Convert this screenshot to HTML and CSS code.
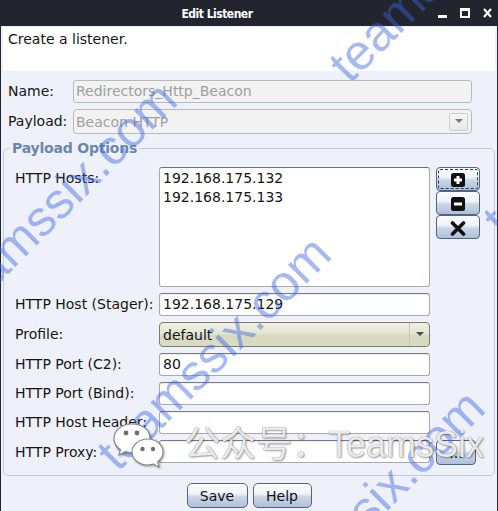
FILE: index.html
```html
<!DOCTYPE html>
<html>
<head>
<meta charset="utf-8">
<link rel="stylesheet" href="styles.css">
</head>
<body>
<div class="window">
  <div class="titlebar">
    <div class="title">Edit Listener</div>
    <div class="controls">
      <span class="ctl-min"></span>
      <span class="ctl-max"></span>
      <svg class="ctl-close" width="9" height="10" viewBox="0 0 9 10"><path d="M1 1L8 9M8 1L1 9" stroke="#fff" stroke-width="2.2"/></svg>
    </div>
  </div>
  <div class="body">
    <div class="desc">Create a listener.</div>
    <div class="top-form">
      <div class="lbl">Name:</div>
      <div class="field disabled">Redirectors_Http_Beacon</div>
      <div class="lbl">Payload:</div>
      <div class="combo disabled-combo">
        <span class="combo-text">Beacon HTTP</span>
        <span class="arrow-box-dis"><svg width="8" height="5" viewBox="0 0 8 5"><path d="M0 0H8L4 4Z" fill="#7a7a7a"/></svg></span>
      </div>
    </div>
    <fieldset class="options">
      <legend>Payload Options</legend>
      <div class="grid">
        <div class="lbl lbl-top">HTTP Hosts:</div>
        <div class="listbox">
          <div class="item">192.168.175.132</div>
          <div class="item">192.168.175.133</div>
        </div>
        <div class="side">
          <div class="btn side-btn focused"><svg width="14" height="14" viewBox="0 0 14 14"><rect width="14" height="14" rx="2.5" fill="#111"/><path d="M7 3V11M3 7H11" stroke="#fff" stroke-width="3"/></svg></div>
          <div class="btn side-btn"><svg width="14" height="14" viewBox="0 0 14 14"><rect width="14" height="14" rx="2.5" fill="#111"/><path d="M3 7H11" stroke="#fff" stroke-width="3"/></svg></div>
          <div class="btn side-btn"><svg width="16" height="15" viewBox="0 0 16 15"><path d="M2.5 2L13.5 13M13.5 2L2.5 13" stroke="#111" stroke-width="3.6" stroke-linecap="round"/></svg></div>
        </div>

        <div class="lbl">HTTP Host (Stager):</div>
        <div class="field">192.168.175.129</div>
        <div></div>

        <div class="lbl">Profile:</div>
        <div class="combo profile">
          <span class="combo-text">default</span>
          <span class="arrow-box"><svg width="8" height="5" viewBox="0 0 8 5"><path d="M0 0H8L4 4Z" fill="#4a4a4a"/></svg></span>
        </div>
        <div></div>

        <div class="lbl">HTTP Port (C2):</div>
        <div class="field">80</div>
        <div></div>

        <div class="lbl">HTTP Port (Bind):</div>
        <div class="field"></div>
        <div></div>

        <div class="lbl">HTTP Host Header:</div>
        <div class="field"></div>
        <div></div>

        <div class="lbl">HTTP Proxy:</div>
        <div class="field"></div>
        <div class="btn proxy-btn">...</div>
      </div>
    </fieldset>
    <div class="actions">
      <div class="btn action save">Save</div>
      <div class="btn action help">Help</div>
    </div>
  </div>

  <div class="wm wm-a">teamssix.com</div>
  <div class="wm wm-b">teamssix.com</div>
  <div class="wm wm-c">teamssix.com</div>
  <div class="wm wm-d">teamssix.com</div>
  <div class="wm wm-e">teamssix.com</div>

  <div class="wechat">
    <svg class="wechat-logo" width="54" height="46" viewBox="0 0 54 46">
      <g fill="#fff" stroke="#8a8a8a" stroke-width="1.2">
        <path d="M20 2C9.5 2 2 8.6 2 16.5c0 4.6 2.5 8.4 6.5 11L7 33l6.4-3.4c2 .6 4.3 .9 6.6 .9 10.5 0 18-6.6 18-14.5S30.5 2 20 2Z"/>
        <path d="M36 17c-9 0-16 5.8-16 13s7 13 16 13c1.9 0 3.8-.3 5.5-.8L47 45l-1.3-5.3c3.3-2.4 5.3-5.8 5.3-9.7 0-7.2-7-13-15-13Z"/>
      </g>
      <g fill="#6e6e6e">
        <circle cx="14" cy="11" r="2.4"/><circle cx="25" cy="11" r="2.4"/>
        <circle cx="30.5" cy="27" r="2.2"/><circle cx="41" cy="27" r="2.2"/>
      </g>
    </svg>
    <span class="wechat-text">公众号：TeamsSix</span>
  </div>
</div>
</body>
</html>
```

FILE: styles.css
```css
* { box-sizing: border-box; }
html, body { margin: 0; padding: 0; }
body {
  width: 498px;
  height: 511px;
  overflow: hidden;
  font-family: "DejaVu Sans", "Noto Sans CJK SC", sans-serif;
  font-size: 14px;
  color: #151515;
  background: #eef1f9;
}
.window {
  position: relative;
  width: 498px;
  height: 511px;
  overflow: hidden;
}
.titlebar {
  height: 26px;
  background: #22252d;
  display: flex;
  align-items: center;
}
.title {
  flex: 1;
  text-align: center;
  color: #fff;
  font-family: "DejaVu Sans Condensed", "DejaVu Sans", sans-serif;
  font-weight: bold;
  font-size: 12px;
  letter-spacing: -0.5px;
  padding-top: 1px;
}
.controls {
  width: 64px;
  display: flex;
  align-items: center;
  gap: 13px;
  padding-left: 4px;
  height: 26px;
}
.ctl-min {
  width: 9px;
  height: 3px;
  background: #fff;
  margin-top: 6px;
}
.ctl-max {
  width: 10px;
  height: 10px;
  border: 2px solid #fff;
  border-top-width: 3px;
}
.ctl-close { display: block; }

.body {
  height: 485px;
  border-left: 1px solid #22252d;
  border-right: 1px solid #22252d;
  padding: 1px 2px 0;
  background: #eef1f9;
}
.desc {
  height: 44px;
  background: #fff;
  padding: 4px 5px;
  line-height: 17px;
}
.top-form {
  margin-top: 9px;
  padding-left: 5px;
  display: grid;
  grid-template-columns: 65px 399px;
  grid-template-rows: 23px 25px;
  row-gap: 6px;
  align-items: center;
}
.lbl {
  white-space: nowrap;
  line-height: 17px;
}
.field {
  height: 23px;
  background: #fff;
  border: 1px solid #a9a9a9;
  border-top-color: #7a7a7a;
  border-radius: 3px;
  box-shadow: inset 0 1px 1px rgba(0,0,0,0.07);
  padding: 0 3px;
  line-height: 21px;
  white-space: nowrap;
}
.field.disabled {
  background: #f2f2f2;
  border-color: #b9b9b9;
  color: #a0a0a0;
  padding-left: 2px;
  box-shadow: none;
}
.combo {
  height: 25px;
  border-radius: 4px;
  display: flex;
  align-items: center;
  white-space: nowrap;
}
.combo-text { flex: 1; }
.disabled-combo {
  background: #f2f2f2;
  border: 1px solid #b9b9b9;
  color: #a0a0a0;
  padding: 0 2px 0 2px;
}
.arrow-box-dis {
  width: 19px;
  height: 18px;
  border: 1px solid #cdcdcd;
  border-radius: 2px;
  background: linear-gradient(#f6f6f6, #e9e9e9);
  display: flex;
  align-items: center;
  justify-content: center;
  margin-right: 1px;
}
.profile {
  border: 1px solid #7b7e66;
  background: linear-gradient(#eff0e4 0%, #e4e6d2 45%, #d6d9bf 55%, #dadcc5 100%);
  padding-left: 3px;
}
.arrow-box {
  width: 20px;
  height: 100%;
  border-left: 1px solid #c6c8b2;
  display: flex;
  align-items: center;
  justify-content: center;
}

.options {
  margin: 6px 0 0;
  padding: 11px 0 10px 11px;
  border: 1px solid #bfcadd;
  border-radius: 5px;
  min-width: 0;
}
.options legend {
  margin-left: -5px;
  padding: 0 2px;
  font-weight: bold;
  font-size: 14px;
  line-height: 16px;
  color: #6b86ad;
  letter-spacing: -0.2px;
}
.grid {
  display: grid;
  grid-template-columns: 138px 271px 44px;
  grid-template-rows: 120px 23px 25px 23px 23px 23px 25px;
  column-gap: 6px;
  row-gap: 6px;
  align-items: center;
}
.grid > .field { align-self: start; }
.lbl-top {
  align-self: start;
  padding-top: 3px;
}
.listbox {
  height: 120px;
  background: #fff;
  border: 1px solid #a9a9a9;
  border-top-color: #6f6f6f;
  border-radius: 3px;
  padding: 1px 3px;
  line-height: 19px;
  align-self: start;
}
.side {
  align-self: start;
  display: flex;
  flex-direction: column;
}
.btn {
  border: 1px solid #52647f;
  border-radius: 5px;
  background: linear-gradient(#fcfdfe 0%, #f0f3f8 42%, #cbd7e7 55%, #adbfd8 100%);
  display: flex;
  align-items: center;
  justify-content: center;
  color: #111;
}
.side-btn {
  height: 24px;
  width: 44px;
  border-radius: 4px;
}
.side-btn svg { margin-top: 2px; }
.focused { outline: 1px dashed #2e3e57; outline-offset: -3px; }
.proxy-btn {
  width: 40px;
  height: 25px;
  align-self: start;
  border-radius: 4px;
  line-height: 1;
}
.actions {
  margin-top: 7px;
  display: flex;
  justify-content: center;
  gap: 5px;
}
.action {
  height: 25px;
  line-height: 1;
}
.save { width: 61px; }
.help { width: 59px; }

.wm {
  position: absolute;
  font-family: "Liberation Sans", Arial, sans-serif;
  font-size: 50px;
  line-height: 50px;
  color: rgba(60, 100, 228, 0.45);
  white-space: nowrap;
  transform-origin: 0 0;
  transform: rotate(-45deg);
  pointer-events: none;
}
.wm-a { left: 320px; top: 55px; }
.wm-b { left: -66px; top: 289px; }
.wm-c { left: 88px; top: 443px; }
.wm-d { left: 242px; top: 597px; }
.wm-e { left: 474px; top: 209px; }

.wechat {
  position: absolute;
  left: 112px;
  top: 422px;
  display: flex;
  align-items: center;
  gap: 18px;
  pointer-events: none;
}
.wechat-logo { filter: drop-shadow(1px 1px 1px rgba(0,0,0,0.35)); }
.wechat-text {
  font-family: "Liberation Sans", "Noto Sans CJK SC", sans-serif;
  font-size: 36px;
  line-height: 44px;
  color: rgba(255,255,255,0.9);
  text-shadow: 0 0 1px rgba(0,0,0,0.55), 1px 1px 2px rgba(0,0,0,0.35);
  white-space: nowrap;
}
```
